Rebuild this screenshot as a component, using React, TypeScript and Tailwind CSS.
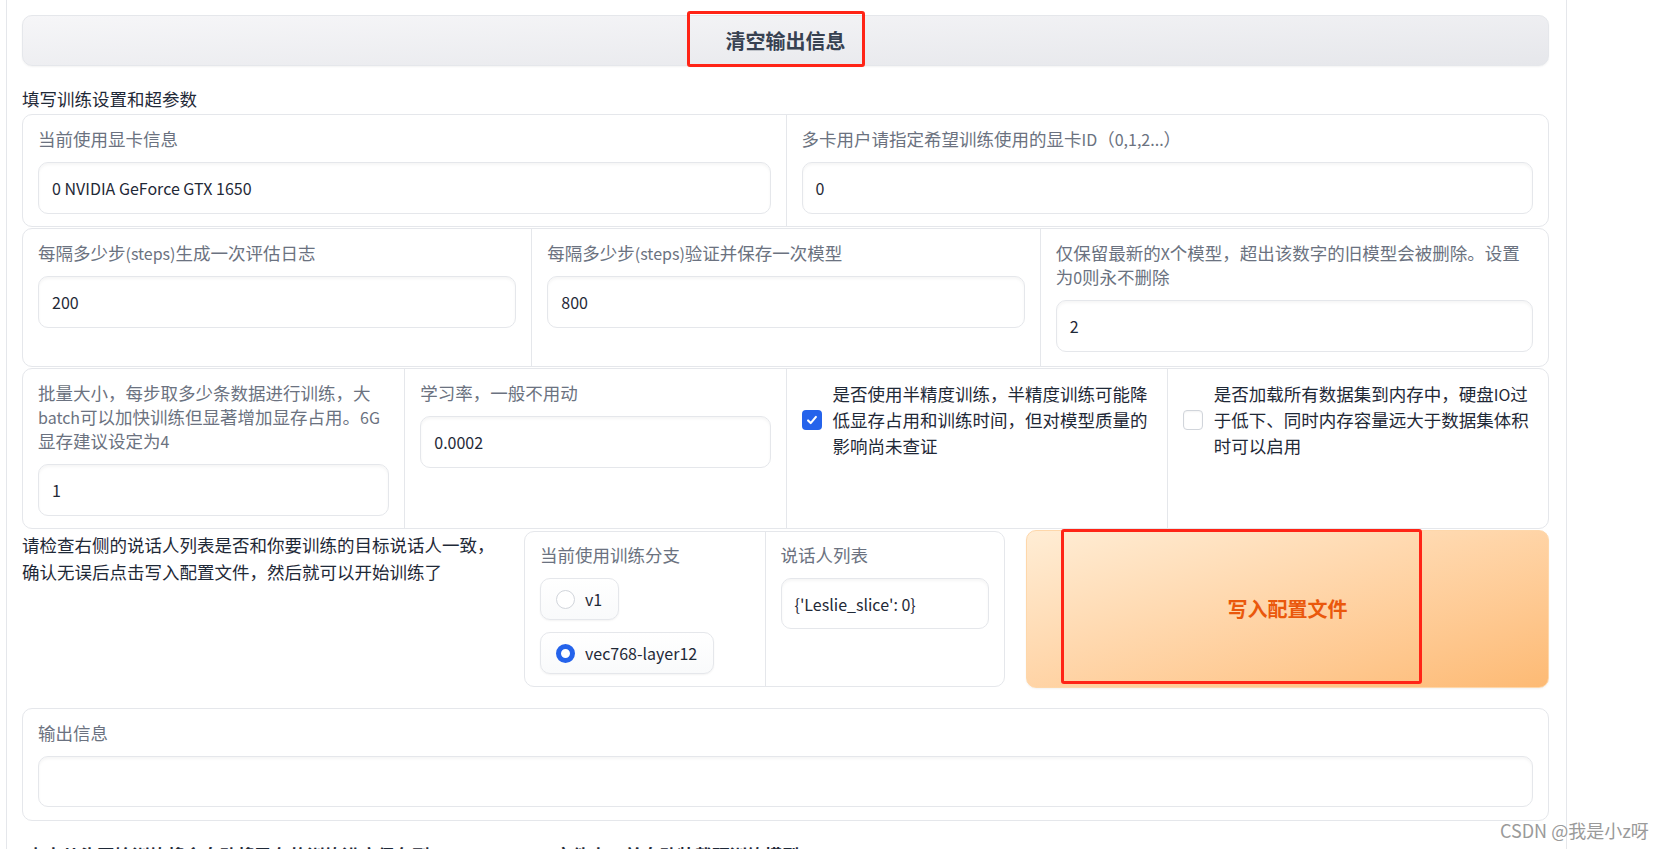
import React from "react";

const font = { fontFamily: '"Noto Sans CJK SC", "Noto Sans", sans-serif' };

// Latin runs are set a bit smaller so their width matches the reference's Latin face
function T({ s }: { s: string }) {
  const parts = s.split(/([\x21-\x7e](?:[\x20-\x7e]*[\x21-\x7e])?)/);
  return (
    <>
      {parts.map((p, i) =>
        i % 2 === 1 ? (
          <span key={i} className="text-[16px]">
            {p}
          </span>
        ) : (
          <React.Fragment key={i}>{p}</React.Fragment>
        )
      )}
    </>
  );
}

function Lines({ lines }: { lines: string[] }) {
  return (
    <>
      {lines.map((l, i) => (
        <React.Fragment key={i}>
          {i > 0 && <br />}
          <T s={l} />
        </React.Fragment>
      ))}
    </>
  );
}

function Label({ lines }: { lines: string[] }) {
  return (
    <div className="text-[17.5px] leading-[24px] text-[#6b7280]">
      <Lines lines={lines} />
    </div>
  );
}

function Field({ value, h = "h-[52px]" }: { value: string; h?: string }) {
  return (
    <div
      className={`mt-[11px] ${h} flex items-center rounded-[10px] border border-[#e5e7eb] bg-white px-[13px] text-[17.5px] text-[#1f2937] shadow-[inset_0_2px_3px_rgba(0,0,0,0.04)]`}
    >
      <T s={value} />
    </div>
  );
}

function Cell({ label, value, divider = false, pb = "pb-[12px]" }: { label: string[]; value: string; divider?: boolean; pb?: string }) {
  return (
    <div className={`px-[15px] pt-[12px] ${pb} ${divider ? "border-l border-[#e5e7eb]" : ""}`}>
      <Label lines={label} />
      <Field value={value} />
    </div>
  );
}

function Check({ checked, lines }: { checked: boolean; lines: string[] }) {
  return (
    <div className="border-l border-[#e5e7eb] px-[15px] pt-[12px] pb-[12px]">
      <div className="flex items-center gap-[11px]">
        {checked ? (
          <div className="flex h-[20px] w-[20px] shrink-0 items-center justify-center rounded-[4px] bg-[#2563eb]">
            <svg viewBox="0 0 16 16" className="h-[14px] w-[14px]" fill="none" stroke="white" strokeWidth="2.4" strokeLinecap="round" strokeLinejoin="round">
              <polyline points="3.5,8.5 6.5,11.5 12.5,4.5" />
            </svg>
          </div>
        ) : (
          <div className="h-[20px] w-[20px] shrink-0 rounded-[4px] border border-[#d1d5db] bg-white shadow-[inset_0_1px_2px_rgba(0,0,0,0.05)]" />
        )}
        <div className="text-[17.5px] leading-[26px] text-[#1f2937]">
          <Lines lines={lines} />
        </div>
      </div>
    </div>
  );
}

function Radio({ selected, text }: { selected: boolean; text: string }) {
  return (
    <div className="flex h-[42px] w-fit items-center gap-[10px] rounded-[10px] border border-[#e5e7eb] bg-linear-to-b from-white to-[#f9fafb] pl-[15px] pr-[16px] text-[16px] text-[#1f2937] shadow-[0_1px_2px_rgba(0,0,0,0.05)]">
      {selected ? (
        <div className="h-[19px] w-[19px] rounded-full border-[5px] border-[#2563eb] bg-white" />
      ) : (
        <div className="h-[19px] w-[19px] rounded-full border border-[#d1d5db] bg-white" />
      )}
      <span>{text}</span>
    </div>
  );
}

export default function App() {
  return (
    <div className="relative h-[849px] w-[1668px] overflow-hidden bg-white" style={font}>
      <div className="ml-[6px] min-h-[849px] w-[1561px] border-x border-[#e5e7eb] pl-[15px] pr-[17px] pt-[15px]">
        <button className="flex h-[51px] w-full items-center justify-center rounded-[10px] border border-[#e5e7eb] bg-linear-to-br from-[#f6f6f8] to-[#e6e7eb] text-[20px] font-bold text-[#374151] shadow-[0_1px_2px_rgba(0,0,0,0.05)]">
          清空输出信息
        </button>

        <div className="mt-[20px] text-[17.5px] leading-[25px] text-[#1f2937]">填写训练设置和超参数</div>

        <div className="mt-[3px] grid grid-cols-2 rounded-[10px] border border-[#e5e7eb] bg-white">
          <Cell label={["当前使用显卡信息"]} value="0 NVIDIA GeForce GTX 1650" />
          <Cell label={["多卡用户请指定希望训练使用的显卡ID（0,1,2...）"]} value="0" divider />
        </div>

        <div className="mt-px grid grid-cols-3 rounded-[10px] border border-[#e5e7eb] bg-white">
          <Cell label={["每隔多少步(steps)生成一次评估日志"]} value="200" pb="pb-[14px]" />
          <Cell label={["每隔多少步(steps)验证并保存一次模型"]} value="800" divider pb="pb-[14px]" />
          <Cell label={["仅保留最新的X个模型，超出该数字的旧模型会被删除。设置", "为0则永不删除"]} value="2" divider pb="pb-[14px]" />
        </div>

        <div className="mt-px grid grid-cols-4 rounded-[10px] border border-[#e5e7eb] bg-white">
          <Cell label={["批量大小，每步取多少条数据进行训练，大", "batch可以加快训练但显著增加显存占用。6G", "显存建议设定为4"]} value="1" />
          <Cell label={["学习率，一般不用动"]} value="0.0002" divider />
          <Check checked lines={["是否使用半精度训练，半精度训练可能降", "低显存占用和训练时间，但对模型质量的", "影响尚未查证"]} />
          <Check checked={false} lines={["是否加载所有数据集到内存中，硬盘IO过", "于低下、同时内存容量远大于数据集体积", "时可以启用"]} />
        </div>

        <div className="mt-px flex items-start">
          <div className="w-[482px] pt-px text-[17.5px] leading-[27px] text-[#1f2937]">
            请检查右侧的说话人列表是否和你要训练的目标说话人一致，
            <br />
            确认无误后点击写入配置文件，然后就可以开始训练了
          </div>

          <div className="ml-[20px] mt-px grid h-[156px] w-[481px] grid-cols-2 rounded-[10px] border border-[#e5e7eb] bg-white">
            <div className="px-[15px] pt-[11px]">
              <Label lines={["当前使用训练分支"]} />
              <div className="mt-[11px] flex flex-col gap-[12px]">
                <Radio selected={false} text="v1" />
                <Radio selected text="vec768-layer12" />
              </div>
            </div>
            <div className="border-l border-[#e5e7eb] px-[15px] pt-[11px]">
              <Label lines={["说话人列表"]} />
              <Field value="{'Leslie_slice': 0}" h="h-[51px]" />
            </div>
          </div>

          <button className="ml-[21px] flex h-[158px] flex-1 items-center justify-center rounded-[10px] border border-[#fed7aa] bg-linear-to-br from-[#ffedd5] to-[#fdba74] text-[20px] font-bold text-[#ea580c] shadow-[0_1px_2px_rgba(0,0,0,0.05)]">
            写入配置文件
          </button>
        </div>

        <div className="mt-[20px] rounded-[10px] border border-[#e5e7eb] bg-white px-[15px] pt-[12px] pb-[13px]">
          <Label lines={["输出信息"]} />
          <Field value="" h="h-[51px]" />
        </div>

        <div className="mt-[22px] pl-[5px] text-[17.5px] font-bold leading-[24px] text-[#1f2937]">
          <T s="点击从头开始训练将会自动将已有的训练进度保存到models_backup文件夹，并自动装载预训练模型。" />
        </div>
      </div>

      <div className="pointer-events-none absolute left-[687px] top-[11px] h-[56px] w-[178px] rounded-[3px] border-[3px] border-[#ff2416]" />
      <div className="pointer-events-none absolute left-[1061px] top-[529px] h-[155px] w-[361px] rounded-[3px] border-[3px] border-[#ff2416]" />

      <div className="absolute left-[1500px] top-[817px] text-[18px] leading-[26px] text-[#9a9a9a]">CSDN @我是小z呀</div>
    </div>
  );
}
